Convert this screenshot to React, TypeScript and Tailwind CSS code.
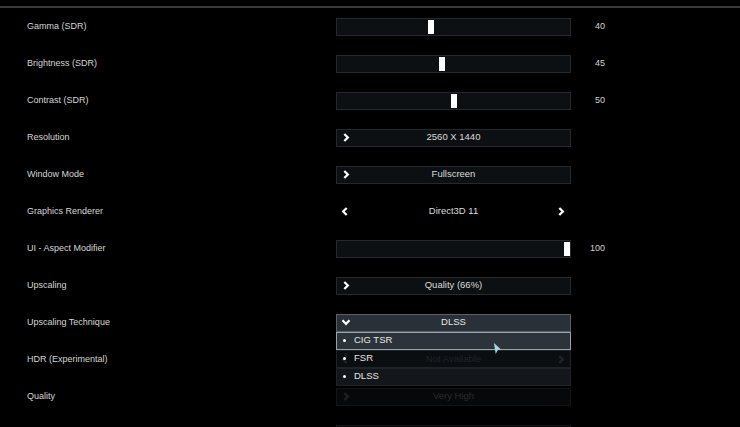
import React from 'react';

const font = { fontFamily: '"Liberation Sans", Arial, sans-serif' };

function ChevronRight({ className = '' }: { className?: string }) {
  return (
    <svg viewBox="0 0 8 10" className={`w-[7px] h-[9px] ${className}`}>
      <path d="M1.5 1 L5.5 5 L1.5 9" fill="none" stroke="currentColor" strokeWidth="2.6" strokeLinejoin="miter" />
    </svg>
  );
}

function ChevronLeft({ className = '' }: { className?: string }) {
  return (
    <svg viewBox="0 0 8 10" className={`w-[7px] h-[9px] ${className}`}>
      <path d="M6.5 1 L2.5 5 L6.5 9" fill="none" stroke="currentColor" strokeWidth="2.6" strokeLinejoin="miter" />
    </svg>
  );
}

function ChevronDown({ className = '' }: { className?: string }) {
  return (
    <svg viewBox="0 0 10 8" className={`w-[10px] h-[7px] ${className}`}>
      <path d="M1 1.5 L5 5.5 L9 1.5" fill="none" stroke="currentColor" strokeWidth="2.6" strokeLinejoin="miter" />
    </svg>
  );
}

function Slider({ value }: { value: number }) {
  return (
    <div className="flex items-center">
      <div className="relative w-[235px] h-[18px] bg-[#0d1013] border border-[#25292d]">
        <div
          className="absolute top-[1px] w-[6px] h-[14px] bg-white"
          style={{ left: `${(value / 100) * 227}px` }}
        />
      </div>
      <div className="w-[34px] text-right text-[9px] text-[#d4d4d4]">{value}</div>
    </div>
  );
}

function Selector({ value, dim = false }: { value: string; dim?: boolean }) {
  return (
    <div
      className={`relative w-[235px] h-[18px] flex items-center border ${
        dim ? 'bg-[#070809] border-[#121416] text-[#2a2d30]' : 'bg-[#0d1013] border-[#25292d] text-[#dcdcdc]'
      }`}
    >
      <ChevronRight className={`absolute left-[6px] ${dim ? 'text-[#1f2225]' : 'text-white'}`} />
      <span className="w-full text-center text-[9.5px]">{value}</span>
    </div>
  );
}

function Cycler({ value, dim = false }: { value: string; dim?: boolean }) {
  return (
    <div className={`relative w-[235px] h-[18px] flex items-center ${dim ? 'text-[#33373b]' : 'text-[#dcdcdc]'}`}>
      <ChevronLeft className={`absolute left-[5px] ${dim ? 'text-[#33373b]' : 'text-white'}`} />
      <span className="w-full text-center text-[9.5px]">{value}</span>
      <ChevronRight className={`absolute right-[6px] ${dim ? 'text-[#33373b]' : 'text-white'}`} />
    </div>
  );
}

function Dropdown() {
  const items = [
    { label: 'CIG TSR', cls: 'bg-[#2c333a] border-[#9aa2aa]' },
    { label: 'FSR', cls: 'bg-[#12171c]/60 border-[#1f2429]' },
    { label: 'DLSS', cls: 'bg-[#13171b] border-[#1f2429]' },
  ];
  return (
    <div className="relative w-[235px] h-[18px]">
      <div className="h-[18px] flex items-center bg-[#293037] border border-[#58616a] text-[#e6e6e6] relative">
        <ChevronDown className="absolute left-[4px] text-white" />
        <span className="w-full text-center text-[9.5px]">DLSS</span>
      </div>
      <div className="absolute left-0 top-[18px] w-full z-10">
        {items.map((item) => (
          <div key={item.label} className={`h-[18px] flex items-center border ${item.cls} text-[#e6e6e6]`}>
            <span className="w-[3px] h-[3px] rounded-full bg-white ml-[6px] mr-[8px]" />
            <span className="text-[9.5px]">{item.label}</span>
          </div>
        ))}
        <svg viewBox="0 0 10 12" className="absolute left-[157px] top-[11px] w-[9px] h-[11px]">
          <path d="M1 0 L9 7 L5.5 7.3 L3 12 Z" fill="#a6d6df" />
        </svg>
      </div>
    </div>
  );
}

export default function App() {
  const rows: { label: string; control: React.ReactNode }[] = [
    { label: 'Gamma (SDR)', control: <Slider value={40} /> },
    { label: 'Brightness (SDR)', control: <Slider value={45} /> },
    { label: 'Contrast (SDR)', control: <Slider value={50} /> },
    { label: 'Resolution', control: <Selector value="2560 X 1440" /> },
    { label: 'Window Mode', control: <Selector value="Fullscreen" /> },
    { label: 'Graphics Renderer', control: <Cycler value="Direct3D 11" /> },
    { label: 'UI - Aspect Modifier', control: <Slider value={100} /> },
    { label: 'Upscaling', control: <Selector value="Quality (66%)" /> },
    { label: 'Upscaling Technique', control: <Dropdown /> },
    { label: 'HDR (Experimental)', control: <Cycler value="Not Available" dim /> },
    { label: 'Quality', control: <Selector value="Very High" dim /> },
    { label: '', control: <Selector value="" dim /> },
  ];

  return (
    <div className="w-[740px] h-[427px] bg-black overflow-hidden" style={font}>
      <div className="h-[6px]" />
      <div className="h-[2px] bg-[#3a3a3a]" />
      <div className="flex flex-col">
        {rows.map((row, i) => (
          <div key={i} className="h-[37px] flex items-center">
            <div className="w-[336px] pl-[27px] text-[9px] text-[#d6d6d6]">{row.label}</div>
            {row.control}
          </div>
        ))}
      </div>
    </div>
  );
}
